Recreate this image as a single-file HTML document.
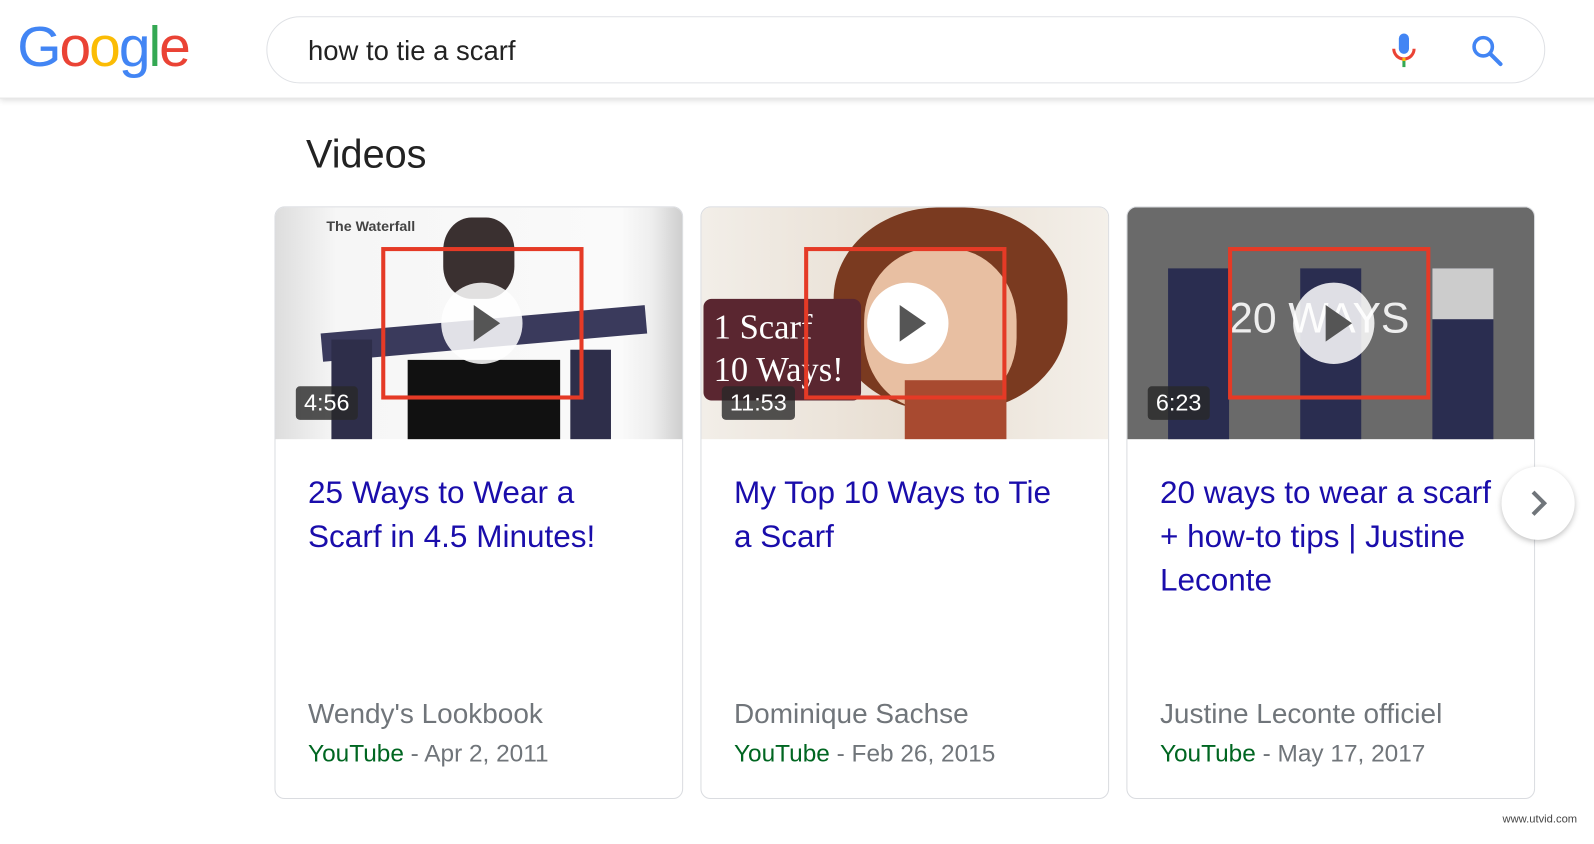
<!DOCTYPE html>
<html><head><style>
*{margin:0;padding:0;box-sizing:border-box}
body{width:1594px;height:830px;background:#fff;font-family:"Liberation Sans",Arial,sans-serif;position:relative;overflow:hidden}
#w{position:absolute;left:0;top:0;width:1594px;height:830px;transform:scale(1.0166);transform-origin:0 0}
.hdr{position:absolute;left:0;top:0;width:1594px;height:97px;background:#fff;box-shadow:0 2px 6px rgba(0,0,0,.15);border-bottom:1px solid #e4e4e4}
.logo{position:absolute;left:17px;top:13px;font-size:56px;letter-spacing:-2px;font-weight:normal}
.sb{position:absolute;left:262px;top:16px;width:1258px;height:66px;border:1px solid #dfe1e5;border-radius:33px}
.q{position:absolute;left:40px;top:18px;font-size:27px;color:#222}
.vid{position:absolute;left:301px;top:131px;font-size:39px;color:#222}
.card{position:absolute;top:203px;width:402px;height:583px;border:1px solid #dadce0;border-radius:10px;overflow:hidden;background:#fff}
.th{position:absolute;left:0;top:0;width:402px;height:228px}
.dur{position:absolute;left:20px;top:176px;background:rgba(40,40,40,.8);color:#fff;font-size:23px;padding:3px 8px;border-radius:4px}
.play{position:absolute;left:163px;top:74px;width:80px;height:80px;border-radius:50%;background:rgba(255,255,255,.85)}
.play:after{content:"";position:absolute;left:32px;top:22px;border-left:26px solid #555;border-top:18px solid transparent;border-bottom:18px solid transparent}
.red{position:absolute;left:104px;top:39px;width:199px;height:150px;border:4px solid #e53a26}
.t{position:absolute;left:32px;top:259px;width:328px;font-size:31px;line-height:43px;color:#1a0dab}
.src{position:absolute;left:32px;top:482px;font-size:27.5px;color:#70757a}
.yt{position:absolute;left:32px;top:524px;font-size:24px;color:#70757a}
.yt b{font-weight:normal;color:#006621}
.nx{position:absolute;left:1477px;top:459px;width:72px;height:72px;border-radius:50%;background:#fff;box-shadow:0 2px 6px rgba(0,0,0,.25)}
</style></head><body><div id="w">
<div class="hdr">
<div class="logo"><span style="color:#4285f4">G</span><span style="color:#ea4335">o</span><span style="color:#fbbc05">o</span><span style="color:#4285f4">g</span><span style="color:#34a853">l</span><span style="color:#ea4335">e</span></div>
<div class="sb"><div class="q">how to tie a scarf</div>
<svg style="position:absolute;left:1103px;top:14px" width="30" height="40" viewBox="0 0 30 40"><rect x="10" y="2" width="10" height="20" rx="5" fill="#4285f4"/><path d="M5 17a10 10 0 0 0 20 0" fill="none" stroke="#ea4335" stroke-width="3"/><rect x="13.5" y="27" width="3" height="8" fill="#34a853"/><rect x="13.5" y="26" width="3" height="3" fill="#fbbc05"/></svg>
<svg style="position:absolute;left:1183px;top:16px" width="34" height="34" viewBox="0 0 34 34"><circle cx="13" cy="13" r="9" fill="none" stroke="#4285f4" stroke-width="3.5"/><path d="M20 20l10 10" stroke="#4285f4" stroke-width="4" stroke-linecap="round"/></svg>
</div></div>
<div class="vid">Videos</div>

<div class="card" style="left:270px">
<div class="th" style="background:linear-gradient(90deg,#ddd 0,#eee 40px,#f6f6f6 60px,#fafafa 340px,#eee 370px,#ccc 402px)">
<div style="position:absolute;left:50px;top:10px;font-size:14px;color:#444;font-weight:bold">The Waterfall</div>
<div style="position:absolute;left:165px;top:10px;width:70px;height:80px;border-radius:40%;background:#3a3030"></div>
<div style="position:absolute;left:130px;top:150px;width:150px;height:78px;background:#111"></div>
<div style="position:absolute;left:45px;top:110px;width:320px;height:28px;background:#3a3a5c;transform:rotate(-5deg)"></div>
<div style="position:absolute;left:55px;top:130px;width:40px;height:98px;background:#2e2e4a"></div>
<div style="position:absolute;left:290px;top:140px;width:40px;height:88px;background:#2e2e4a"></div>
<div class="red"></div><div class="play"></div><div class="dur">4:56</div></div>
<div class="t">25 Ways to Wear a Scarf in 4.5 Minutes!</div>
<div class="src">Wendy's Lookbook</div>
<div class="yt"><b>YouTube</b> - Apr 2, 2011</div></div>

<div class="card" style="left:689px">
<div class="th" style="background:linear-gradient(90deg,#f2eee8,#e8ded2 50%,#f4f0ea)">
<div style="position:absolute;left:130px;top:0;width:230px;height:200px;border-radius:45%;background:#7a3a20"></div>
<div style="position:absolute;left:160px;top:40px;width:150px;height:160px;border-radius:45%;background:#e8bfa2"></div>
<div style="position:absolute;left:200px;top:170px;width:100px;height:58px;background:#a84a30"></div>
<div style="position:absolute;left:2px;top:90px;width:155px;height:100px;background:#5a2630;border-radius:8px;color:#fff;font-family:'Liberation Serif',serif;font-size:34px;padding:8px 10px;line-height:42px">1 Scarf<br>10 Ways!</div>
<div class="red" style="left:101px"></div><div class="play" style="left:163px;background:#fff"></div><div class="dur">11:53</div></div>
<div class="t">My Top 10 Ways to Tie a Scarf</div>
<div class="src">Dominique Sachse</div>
<div class="yt"><b>YouTube</b> - Feb 26, 2015</div></div>

<div class="card" style="left:1108px">
<div class="th" style="background:#6a6a6a">
<div style="position:absolute;left:40px;top:60px;width:60px;height:168px;background:#2a2d50"></div>
<div style="position:absolute;left:170px;top:60px;width:60px;height:168px;background:#2a2d50"></div>
<div style="position:absolute;left:300px;top:60px;width:60px;height:168px;background:#2a2d50"></div>
<div style="position:absolute;left:300px;top:60px;width:60px;height:50px;background:#ccc"></div>
<div style="position:absolute;left:100px;top:85px;font-size:42px;color:#eee">20 WAYS</div>
<div class="red" style="left:99px"></div><div class="play"></div><div class="dur">6:23</div></div>
<div class="t">20 ways to wear a scarf + how-to tips | Justine Leconte</div>
<div class="src">Justine Leconte officiel</div>
<div class="yt"><b>YouTube</b> - May 17, 2017</div></div>

<div class="nx"><svg width="72" height="72" viewBox="0 0 72 72"><path d="M31 25l11 11-11 11" fill="none" stroke="#70757a" stroke-width="4"/></svg></div>
<div style="position:absolute;left:1478px;top:800px;font-size:11px;color:#444">www.utvid.com</div>
</div></body></html>
